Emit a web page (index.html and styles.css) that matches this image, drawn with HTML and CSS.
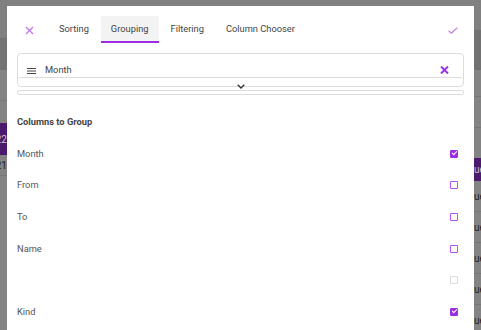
FILE: index.html
```html
<!DOCTYPE html>
<html lang="en">
<head>
    <meta charset="UTF-8">
    <meta name="viewport" content="width=device-width, initial-scale=1.0">
    <title>Grid Options</title>
    <link rel="stylesheet" href="styles.css">
</head>
<body>

    <!-- pagina de fondo, tapada por el dialogo -->
    <div class="page">
        <div class="strip strip-left">
            <div class="cell top"></div>
            <div class="cell head"></div>
            <div class="cell h30 line"></div>
            <div class="cell h22"></div>
            <div class="cell selected h32">22</div>
            <div class="cell h20 line">21</div>
            <div class="cell fill"></div>
        </div>
        <div class="strip strip-right">
            <div class="cell top-r"></div>
            <div class="cell head-r"></div>
            <div class="cell h26 line"></div>
            <div class="cell h31 line"></div>
            <div class="cell h31"></div>
            <div class="cell selected h23">ue</div>
            <div class="cell h31 line">ue</div>
            <div class="cell h31 line">ue</div>
            <div class="cell h31 line">ue</div>
            <div class="cell h31 line">ue</div>
            <div class="cell h31 line">ue</div>
        </div>
    </div>

    <div class="modal">
        <div class="modal-header">
            <button class="icon-button close">
                <svg width="9" height="9" viewBox="0 0 9 9"><path d="M1 1L8 8M8 1L1 8" stroke="#bd78f0" stroke-width="1.3" fill="none"/></svg>
            </button>
            <div class="tabs">
                <div class="tab">Sorting</div>
                <div class="tab active">Grouping</div>
                <div class="tab">Filtering</div>
                <div class="tab">Column Chooser</div>
            </div>
            <button class="icon-button apply">
                <svg width="10" height="7" viewBox="0 0 10 7"><path d="M0.6 3.6L3.4 6.2L9.4 0.6" stroke="#b877ec" stroke-width="1.2" fill="none"/></svg>
            </button>
        </div>

        <div class="group-panel">
            <div class="group-item">
                <svg class="drag" width="9" height="7" viewBox="0 0 9 7"><path d="M0 1.5H9M0 4H9M0 6.5H9" stroke="#444" stroke-width="1"/></svg>
                <span class="group-name">Month</span>
                <svg class="remove" width="9" height="8" viewBox="0 0 9 8"><path d="M1 0.5L8 7.5M8 0.5L1 7.5" stroke="#9a2de6" stroke-width="1.9" fill="none"/></svg>
            </div>
            <div class="expander">
                <svg width="8" height="5" viewBox="0 0 8 5"><path d="M0.7 0.7L4 4L7.3 0.7" stroke="#333" stroke-width="1.3" fill="none"/></svg>
            </div>
        </div>
        <div class="group-foot"></div>

        <div class="section-title">Columns to Group</div>

        <div class="column-list">
            <div class="column-row"><span>Month</span><span class="checkbox checked"></span></div>
            <div class="column-row"><span>From</span><span class="checkbox"></span></div>
            <div class="column-row"><span>To</span><span class="checkbox"></span></div>
            <div class="column-row"><span>Name</span><span class="checkbox"></span></div>
            <div class="column-row"><span></span><span class="checkbox disabled"></span></div>
            <div class="column-row"><span>Kind</span><span class="checkbox checked"></span></div>
        </div>
    </div>

</body>
</html>
```

FILE: styles.css
```css
body {
    margin: 0;
    font-family: Roboto, "Liberation Sans", sans-serif;
    background-color: #808080;
    width: 481px;
    height: 330px;
    overflow: hidden;
}
.page {
    display: flex;
    justify-content: space-between;
    height: 330px;
}
.strip {
    width: 7px;
    overflow: hidden;
    font-size: 10px;
}
.cell {
    display: flex;
    align-items: center;
    white-space: nowrap;
    background-color: #838383;
    color: #1e1e1e;
}
.strip-left .cell {
    justify-content: flex-end;
}
.line {
    border-bottom: 1px solid #767676;
}
.top { height: 38px; background-color: #808080; }
.head { height: 32px; background-color: #737373; }
.top-r { height: 30px; background-color: #808080; }
.head-r { height: 40px; background-color: #717171; }
.h20 { height: 20px; }
.h22 { height: 22px; }
.h23 { height: 23px; }
.h26 { height: 26px; }
.h30 { height: 30px; }
.h31 { height: 30px; }
.h32 { height: 32px; }
.fill { height: 200px; }
.selected {
    background-color: #4b1a6d;
    color: #c9c0d0;
}

.modal {
    position: absolute;
    left: 7px;
    top: 6px;
    width: 447px;
    height: 330px;
    background-color: white;
    padding: 10px 10px 0 10px;
    color: #555;
    font-size: 9.3px;
}
.modal-header {
    display: flex;
    align-items: center;
    height: 27px;
}
.icon-button {
    border: none;
    background: none;
    padding: 0;
    display: flex;
    align-items: center;
    justify-content: center;
    cursor: pointer;
}
.close {
    width: 24px;
    height: 27px;
    padding-top: 1px;
}
.apply {
    margin-left: auto;
    width: 10px;
    height: 27px;
    margin-right: 6px;
    padding-top: 1px;
}
.tabs {
    display: flex;
    gap: 2px;
    margin-left: 8px;
}
.tab {
    height: 25px;
    line-height: 26px;
    padding: 0 10px;
    color: #444;
    border-bottom: 2px solid transparent;
}
.tab.active {
    background-color: #f3f3f3;
    border-bottom-color: #9b2ee4;
}

.group-panel {
    margin-top: 10px;
    border: 1px solid #dcdcdc;
    border-radius: 4px;
}
.group-item {
    display: flex;
    align-items: center;
    height: 14px;
    padding: 9px 0 0 9px;
    line-height: 12px;
    color: #444;
}
.drag {
    margin-right: 9px;
}
.remove {
    margin-left: auto;
    margin-right: 14px;
}
.expander {
    height: 8px;
    border-top: 1px solid #dcdcdc;
    border-radius: 3px 3px 0 0;
    display: flex;
    justify-content: center;
}
.expander svg {
    margin-top: 6px;
    margin-left: 1px;
}
.group-foot {
    margin-top: 3px;
    height: 3px;
    border: 1px solid #dcdcdc;
    border-radius: 2px;
}

.section-title {
    margin-top: 21px;
    font-weight: bold;
    color: #444;
    line-height: 12px;
}
.column-list {
    margin-top: 13px;
}
.column-row {
    display: flex;
    justify-content: space-between;
    align-items: center;
    height: 31.66px;
    line-height: 12px;
}
.column-row span:first-child {
    margin-top: -6px;
}
.checkbox {
    width: 6px;
    height: 6px;
    border: 1.5px solid #b552f2;
    border-radius: 1px;
    margin-right: 6px;
    margin-top: -6px;
    position: relative;
}
.checkbox.checked {
    background-color: #9b2ee4;
    border-color: #9b2ee4;
}
.checkbox.checked:after {
    content: "";
    position: absolute;
    left: 1px;
    top: 0px;
    width: 4px;
    height: 2px;
    border-left: 1.3px solid white;
    border-bottom: 1.3px solid white;
    transform: rotate(-45deg);
}
.checkbox.disabled {
    border-color: #d9d9d9;
}
```
